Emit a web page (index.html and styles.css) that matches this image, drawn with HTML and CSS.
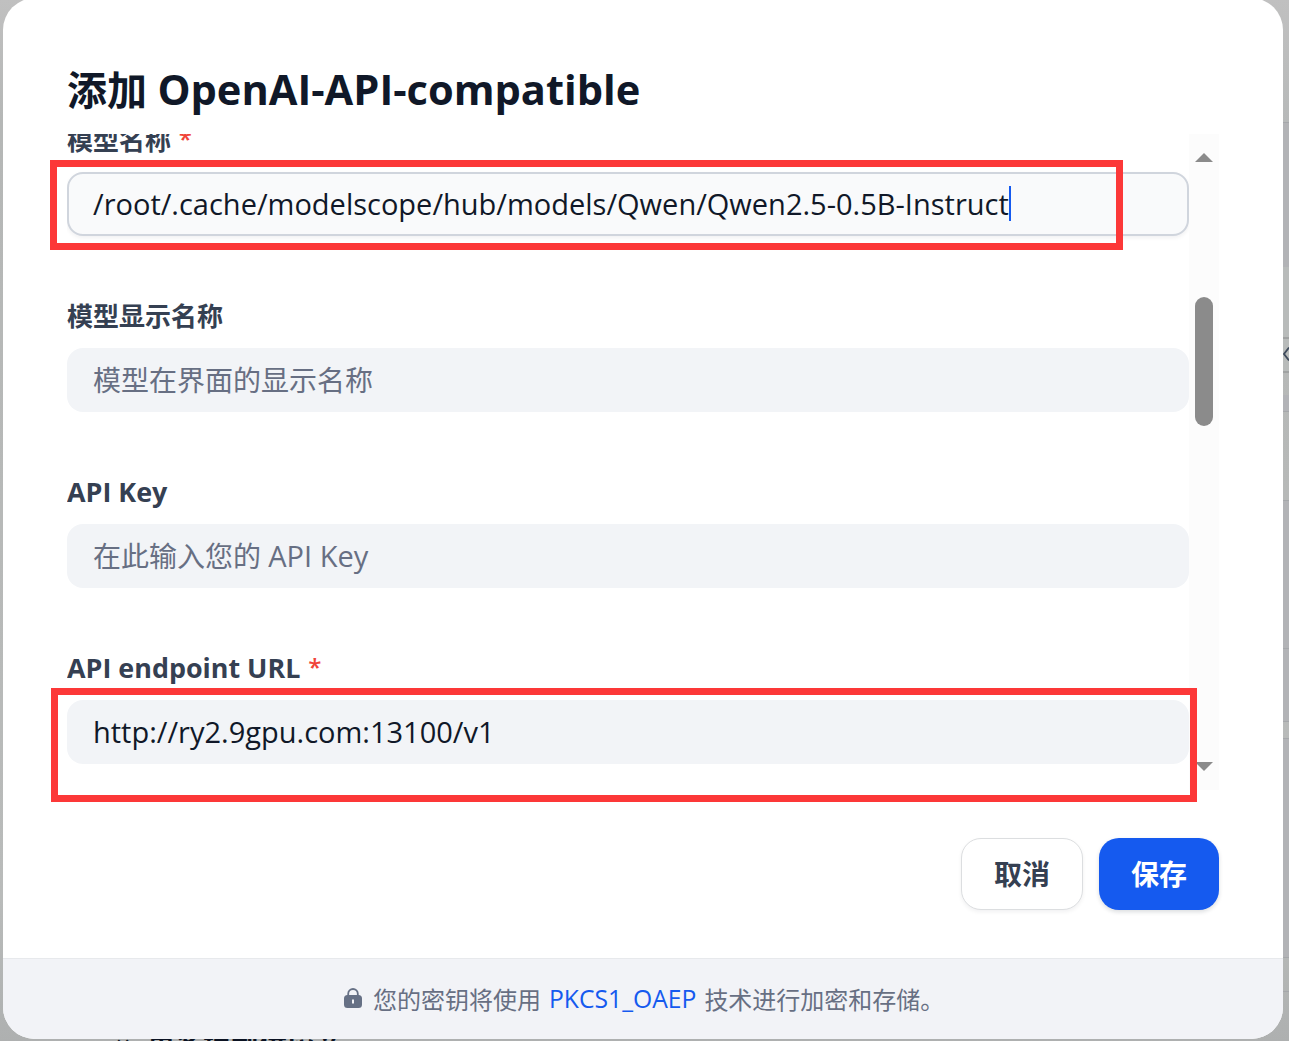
FILE: index.html
```html
<!DOCTYPE html>
<html lang="zh-CN">
<head>
    <meta charset="UTF-8">
    <meta name="viewport" content="width=device-width, initial-scale=1.0">
    <title>添加 OpenAI-API-compatible</title>
    <link rel="stylesheet" href="styles.css">
</head>
<body>
    <!-- page behind the dialog -->
    <div class="page-behind">
        <div class="behind-text"><span class="behind-x">×</span>更多模型供应商</div>
        <div class="strip">
            <div class="card card-1"></div>
            <div class="card card-2"></div>
            <div class="arrow-box">
                <svg width="6" height="16" viewBox="0 0 6 16"><path d="M6 1.500 1 8l5 6.500" fill="none" stroke="#3f4b5c" stroke-width="1.800"/></svg>
            </div>
            <div class="card card-3"></div>
            <div class="card card-4"></div>
            <div class="card card-5"></div>
            <div class="card card-6"></div>
            <div class="card card-7"></div>
            <div class="card card-8"></div>
            <div class="card card-9"></div>
            <div class="card card-10"></div>
        </div>
    </div>

    <div class="modal">
        <div class="modal-main">
            <h1 class="title">添加 <span class="title-en">OpenAI-API-compatible</span></h1>

            <div class="scroll-area">
                <div class="fields">
                    <div class="field">
                        <div class="label">模型名称 <span class="required">*</span></div>
                        <div class="input focused"><span class="latin">/root/.cache/modelscope/hub/models/Qwen/Qwen2.5-0.5B-Instruct</span><span class="caret"></span></div>
                    </div>
                    <div class="field">
                        <div class="label">模型显示名称</div>
                        <div class="input placeholder">模型在界面的显示名称</div>
                    </div>
                    <div class="field">
                        <div class="label"><span class="label-en">API Key</span></div>
                        <div class="input placeholder">在此输入您的 <span class="latin">API Key</span></div>
                    </div>
                    <div class="field">
                        <div class="label"><span class="label-en">API endpoint URL</span> <span class="required">*</span></div>
                        <div class="input"><span class="latin">http://ry2.9gpu.com:13100/v1</span></div>
                    </div>
                </div>
                <div class="scrollbar">
                    <svg class="arrow" width="18" height="9" viewBox="0 0 18 9"><path d="M0 9 9 0l9 9z" fill="#8b8b8b"/></svg>
                    <div class="thumb"></div>
                    <svg class="arrow" width="18" height="9" viewBox="0 0 18 9"><path d="M0 0h18L9 9z" fill="#8b8b8b"/></svg>
                </div>
            </div>

            <div class="actions">
                <button class="btn">取消</button>
                <button class="btn btn-primary">保存</button>
            </div>
        </div>

        <div class="modal-footer">
            <svg class="lock" width="18" height="20" viewBox="0 0 18 20">
                <path d="M4.200 8V5.800a4.800 4.800 0 0 1 9.600 0V8" fill="none" stroke="#667085" stroke-width="1.800"/>
                <path fill="#667085" fill-rule="evenodd" d="M3.500 7h11A3.500 3.500 0 0 1 18 10.500v6a3.500 3.500 0 0 1-3.500 3.500h-11A3.500 3.500 0 0 1 0 16.500v-6A3.500 3.500 0 0 1 3.500 7zM8 11.500v4h2v-4z"/>
            </svg>
            <span>您的密钥将使用</span>
            <a class="link">PKCS1_OAEP</a>
            <span>技术进行加密和存储。</span>
        </div>
    </div>

    <!-- highlight boxes -->
    <div class="mark mark-name"></div>
    <div class="mark mark-url"></div>
</body>
</html>
```

FILE: styles.css
```css
* {
    box-sizing: border-box;
}
body {
    margin: 0;
    height: 1041px;
    overflow: hidden;
    position: relative;
    background: #b9bbbb;
    font-family: "Open Sans", "Noto Sans CJK SC", sans-serif;
    color: #101828;
}
.page-behind {
    position: absolute;
    inset: 0;
    display: flex;
    justify-content: flex-end;
    background: linear-gradient(#c0c0c0, #b5b7b6 120px, #b9bbba 900px, #aeb0b0);
}
.behind-text {
    position: absolute;
    left: 115px;
    top: 1029px;
    display: flex;
    font-size: 28px;
    line-height: 32px;
    font-weight: 700;
    color: #0b1222;
}
.behind-x {
    width: 32px;
}
.strip {
    width: 6px;
    display: flex;
    flex-direction: column;
}
.card {
    flex: none;
    border-bottom: 1px solid #a5a7aa;
}
.card-1 { height: 123px; background: linear-gradient(#c0c0c0, #b7b9b9); }
.card-2 { height: 144px; background: #b2b3b6; border: 0; }
.arrow-box {
    flex: none;
    height: 106px;
    padding-top: 79px;
    border-bottom: 2px solid #a0a2a2;
    background: linear-gradient(#b8bbba 70px, #a0a2a2 70px, #a0a2a2 72px, #b8bbba 72px);
}
.arrow-box svg {
    display: block;
}
.card-3 { height: 22px; border: 0; }
.card-4 { height: 17px; background: #b2b3b7; }
.card-5 { height: 89px; }
.card-6 { height: 148px; background: #b2b3b6; }
.card-7 { height: 73px; background: #b2b3b6; }
.card-8 { height: 17px; }
.card-9 { height: 219px; background: #b2b3b6; }
.card-10 { height: 34px; }

.modal {
    position: relative;
    display: flex;
    flex-direction: column;
    width: 1280px;
    height: 1041px;
    margin: -2px 0 0 3px;
    border-radius: 32px;
    overflow: hidden;
    background: #fff;
}
.modal-main {
    flex: 1;
    padding: 62px 64px 0;
}
.title {
    margin: 0;
    height: 74px;
    font-size: 40px;
    line-height: 60px;
    font-weight: 700;
    white-space: nowrap;
}
.title-en {
    font-size: 41.6px;
    line-height: 1;
}
.scroll-area {
    display: flex;
    height: 656px;
    overflow: hidden;
}
.fields {
    flex: 1;
    margin-top: -16px;
}
.field {
    height: 176px;
}
.label {
    height: 54px;
    line-height: 44px;
    font-size: 26px;
    font-weight: 700;
    color: #354052;
    white-space: pre;
}
.label-en {
    font-size: 26.9px;
    line-height: 1;
}
.required {
    position: relative;
    top: -2px;
    left: 1px;
    font-size: 24px;
    line-height: 1;
    font-weight: 600;
    color: #f04438;
}
.input {
    display: flex;
    align-items: center;
    height: 64px;
    padding: 0 26px 2px;
    border-radius: 16px;
    background: #f2f4f7;
    font-size: 28px;
    white-space: pre;
}
.latin {
    font-size: 29px;
}
.focused {
    padding: 0 24px 2px;
    border: 2px solid #d0d5dd;
    background: #f9fafb;
    box-shadow: 0 2px 4px rgba(16, 24, 40, 0.06);
}
.placeholder {
    color: #676f83;
}
.caret {
    width: 2px;
    height: 35px;
    background: #155aef;
}
.scrollbar {
    display: flex;
    flex-direction: column;
    align-items: center;
    width: 30px;
    padding: 19px 0;
    background: #fcfcfc;
}
.thumb {
    width: 18px;
    height: 129px;
    margin: 135px 0 auto;
    border-radius: 9px;
    background: #8b8b8b;
}
.actions {
    display: flex;
    justify-content: flex-end;
    gap: 16px;
    padding-top: 48px;
}
.btn {
    width: 122px;
    height: 72px;
    padding: 0 0 2px;
    border: 1px solid #dcdee0;
    border-radius: 20px;
    background: #fff;
    box-shadow: 0 2px 4px rgba(16, 24, 40, 0.06);
    font: 700 28px "Noto Sans CJK SC", sans-serif;
    color: #354052;
}
.btn-primary {
    width: 120px;
    border: 0;
    background: #155aef;
    box-shadow: 0 2px 4px rgba(16, 24, 40, 0.15);
    color: #fff;
}
.modal-footer {
    display: flex;
    align-items: center;
    height: 81px;
    padding: 0 0 2px 341px;
    border-top: 1px solid #e7e9ec;
    background: #f2f3f7;
    font-size: 24px;
    color: #676f83;
    white-space: nowrap;
}
.lock {
    margin-right: 11px;
}
.link {
    margin: 0 8px;
    font-size: 24.7px;
    color: #155aef;
}

.mark {
    position: absolute;
    border: 7px solid #fc3838;
}
.mark-name {
    left: 50px;
    top: 160px;
    width: 1073px;
    height: 90px;
}
.mark-url {
    left: 51px;
    top: 688px;
    width: 1146px;
    height: 114px;
}
```
